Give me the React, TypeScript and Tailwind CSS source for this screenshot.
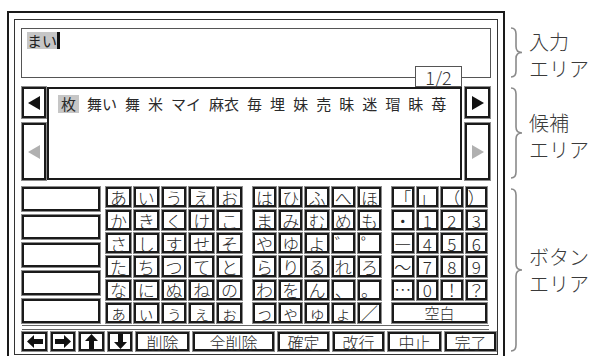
import React from "react";

const FONT = "font-['Noto_Sans_CJK_JP','Noto_Sans',sans-serif]";

function Key({ children, className = "" }: { children?: React.ReactNode; className?: string }) {
  return (
    <div
      className={
        "flex items-center justify-center border-2 border-[#1a1a1a] bg-white shadow-[0_0_0_1px_#8c8c8c] text-[#2a2a2a] leading-none font-light " +
        className
      }
    >
      {children}
    </div>
  );
}

function Tri({ dir, color }: { dir: "l" | "r"; color: string }) {
  return (
    <svg width="12" height="14" viewBox="0 0 12 14">
      {dir === "l" ? (
        <polygon points="0,7 12,0 12,14" fill={color} />
      ) : (
        <polygon points="12,7 0,0 0,14" fill={color} />
      )}
    </svg>
  );
}

function Arrow({ dir }: { dir: "l" | "r" | "u" | "d" }) {
  const pts: Record<string, string> = {
    l: "0,6.5 7,0 7,4 16,4 16,9 7,9 7,13",
    r: "16,6.5 9,0 9,4 0,4 0,9 9,9 9,13",
    u: "6.5,0 13,7 9,7 9,15 4,15 4,7 0,7",
    d: "6.5,15 13,8 9,8 9,0 4,0 4,8 0,8",
  };
  const hor = dir === "l" || dir === "r";
  const w = hor ? 16 : 13;
  const h = hor ? 13 : 15;
  return (
    <svg width={w} height={h} viewBox={`0 0 ${w} ${h}`}>
      <polygon points={pts[dir]} fill="#111" />
    </svg>
  );
}

function Brace({ h }: { h: number }) {
  const m = h / 2;
  const d = `M1,1 Q6,1 6,7 L6,${m - 6} Q6,${m} 12,${m} Q6,${m} 6,${m + 6} L6,${h - 7} Q6,${h - 1} 1,${h - 1}`;
  return (
    <svg width="14" height={h} viewBox={`0 0 14 ${h}`} className="shrink-0">
      <path d={d} fill="none" stroke="#8a8a8a" strokeWidth="1.6" />
    </svg>
  );
}

const g1 = [
  ["あ", "い", "う", "え", "お"],
  ["か", "き", "く", "け", "こ"],
  ["さ", "し", "す", "せ", "そ"],
  ["た", "ち", "つ", "て", "と"],
  ["な", "に", "ぬ", "ね", "の"],
  ["ぁ", "ぃ", "ぅ", "ぇ", "ぉ"],
];
const g2 = [
  ["は", "ひ", "ふ", "へ", "ほ"],
  ["ま", "み", "む", "め", "も"],
  ["や", "ゆ", "よ", "゛", "゜"],
  ["ら", "り", "る", "れ", "ろ"],
  ["わ", "を", "ん", "、", "。"],
  ["っ", "ゃ", "ゅ", "ょ", "／"],
];
const g3 = [
  ["「", "」", "（", "）"],
  ["・", "1", "2", "3"],
  ["―", "4", "5", "6"],
  ["～", "7", "8", "9"],
  ["…", "0", "！", "？"],
];

const cands = ["舞い", "舞", "米", "マイ", "麻衣", "毎", "埋", "妹", "売", "昧", "迷", "瑁", "眛", "苺"];

export default function App() {
  return (
    <div className={"w-[593px] h-[356px] bg-white overflow-hidden flex items-start " + FONT}>
      {/* outer frame */}
      <div className="ml-[7px] mt-[11px] w-[498px] h-[360px] shrink-0 border-2 border-[#1a1a1a] pt-[6px] pl-[5px]">
        {/* inner frame */}
        <div className="w-[484px] h-[336px] border border-[#333] flex flex-col">
          {/* input area */}
          <div className="relative ml-[6px] mt-[8px] w-[470px] h-[50px] border border-[#555]">
            <div className="flex items-center pl-[5px] pt-[3px]">
              <span className="bg-[#c6c6c6] text-[15px] leading-[17px] text-[#222]">まい</span>
              <span className="w-[3px] h-[17px] bg-[#111]" />
            </div>
            <div className="absolute left-[393px] top-[37px] w-[47px] h-[21px] bg-white border border-[#555] flex items-center justify-center text-[18px] leading-none text-[#333] font-light">
              1/2
            </div>
          </div>

          {/* candidate area */}
          <div className="ml-[7px] mt-[9px] h-[93px] flex">
            <div className="w-[24px] flex flex-col gap-[5px]">
              <Key className="h-[31px]">
                <Tri dir="l" color="#111" />
              </Key>
              <Key className="flex-1">
                <Tri dir="l" color="#b0b0b0" />
              </Key>
            </div>
            <div className="ml-[1px] w-[415px] border-2 border-[#1a1a1a] bg-white pt-[6px] pl-[9px]">
              <div className="flex items-center gap-x-[8px] text-[15px] leading-[18px] text-[#2a2a2a]">
                <span className="bg-[#c6c6c6] px-[3px]">枚</span>
                {cands.map((c, i) => (
                  <span key={i}>{c}</span>
                ))}
              </div>
            </div>
            <div className="ml-[3px] w-[25px] flex flex-col gap-[5px]">
              <Key className="h-[31px]">
                <Tri dir="r" color="#111" />
              </Key>
              <Key className="flex-1">
                <Tri dir="r" color="#b0b0b0" />
              </Key>
            </div>
          </div>

          {/* button area */}
          <div className="ml-[7px] mt-[7px] h-[136px] flex">
            <div className="w-[78px] flex flex-col justify-between">
              {[0, 1, 2, 3, 4].map((i) => (
                <Key key={i} className="h-[24px]" />
              ))}
            </div>
            <div className="ml-[6px] w-[136px] grid grid-cols-5 grid-rows-6 gap-[3px]">
              {g1.flat().map((k, i) => (
                <Key key={i} className="text-[17px]">
                  {k}
                </Key>
              ))}
            </div>
            <div className="ml-[11px] w-[128px] grid grid-cols-5 grid-rows-6 gap-[3px]">
              {g2.flat().map((k, i) => (
                <Key key={i} className="text-[17px]">
                  {k}
                </Key>
              ))}
            </div>
            <div className="ml-[11px] w-[95px] grid grid-cols-4 grid-rows-6 gap-[3px]">
              {g3.flat().map((k, i) => (
                <Key key={i} className="text-[17px]">
                  {k}
                </Key>
              ))}
              <Key className="col-span-4 text-[15px]">空白</Key>
            </div>
          </div>

          {/* double line */}
          <div className="ml-[7px] mt-[2px] w-[467px] h-[5px] border-y border-[#666]" />

          {/* bottom row */}
          <div className="ml-[7px] mt-[2px] h-[19px] flex gap-[4px] text-[16px]">
            <Key className="w-[25px]">
              <Arrow dir="l" />
            </Key>
            <Key className="w-[24px]">
              <Arrow dir="r" />
            </Key>
            <Key className="w-[25px]">
              <Arrow dir="u" />
            </Key>
            <Key className="w-[24px]">
              <Arrow dir="d" />
            </Key>
            <Key className="w-[53px]">削除</Key>
            <Key className="w-[81px]">全削除</Key>
            <Key className="w-[51px]">確定</Key>
            <Key className="w-[51px]">改行</Key>
            <Key className="w-[53px]">中止</Key>
            <Key className="w-[51px]">完了</Key>
          </div>
        </div>
      </div>

      {/* annotations */}
      <div className="ml-[5px] mt-[27px] flex flex-col text-[20px] leading-[27px] text-[#3a3a3a] font-light">
        <div className="h-[51px] flex items-center">
          <Brace h={51} />
          <div className="ml-[5px] pt-[5px]">
            <div>入力</div>
            <div>エリア</div>
          </div>
        </div>
        <div className="mt-[9px] h-[92px] flex items-center">
          <Brace h={92} />
          <div className="ml-[5px] pt-[5px]">
            <div>候補</div>
            <div>エリア</div>
          </div>
        </div>
        <div className="mt-[9px] h-[164px] flex items-center">
          <Brace h={164} />
          <div className="ml-[5px]">
            <div>ボタン</div>
            <div>エリア</div>
          </div>
        </div>
      </div>
    </div>
  );
}
